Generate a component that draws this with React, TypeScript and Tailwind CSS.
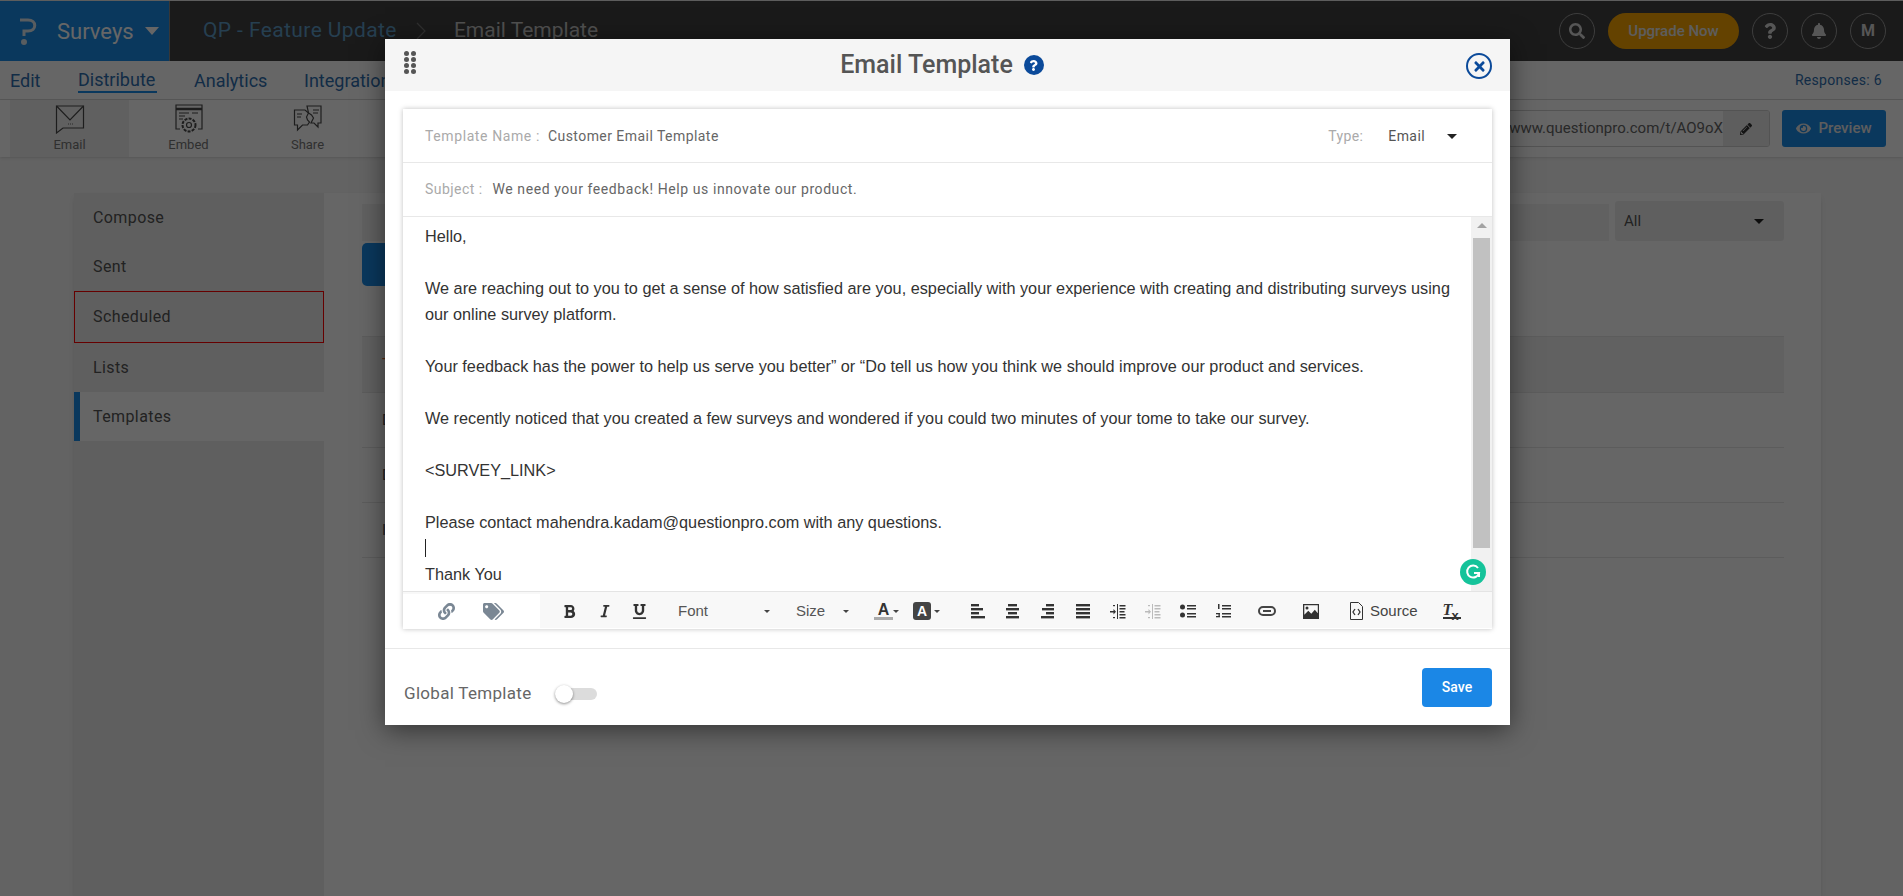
import type { ReactNode } from 'react'
import { FaBell, FaEye, FaLink, FaPencilAlt, FaQuestion, FaSearch, FaTags, FaTimes, FaBold, FaItalic, FaUnderline } from 'react-icons/fa'

const sideItems = ['Compose', 'Sent', 'Scheduled', 'Lists', 'Templates']
const tableRows = ['Default', 'Default', 'Invite']

function Caret({ className }: { className: string }) {
  return <span className={`inline-block h-0 w-0 border-x-transparent border-b-0 border-t-current ${className}`} />
}

function RoundButton({ children }: { children: ReactNode }) {
  return (
    <div className="flex h-9 w-9 items-center justify-center rounded-full border border-[#9a9a9a] text-[#d8d8d8]">
      {children}
    </div>
  )
}

function EmailIcon() {
  return (
    <svg width="30" height="30" viewBox="0 0 30 30" fill="none" stroke="#4a4a4a" strokeWidth="1.2">
      <path d="M1.5 2h27v22H8l-6.5 5z" />
      <path d="M1.5 2 15 16 28.5 2" />
      <path d="M13 20h.8M15 20h.8M17 20h.8" />
    </svg>
  )
}

function EmbedIcon() {
  return (
    <svg width="28" height="30" viewBox="0 0 28 30" fill="none" stroke="#4a4a4a" strokeWidth="1.2">
      <path d="M5 25H1V1h26v24h-4" />
      <path d="M1 5h26" strokeWidth="2.5" />
      <path d="M4 9h10M4 12h6M4 15h4M17 9h6" />
      <circle cx="14" cy="21" r="6.5" strokeDasharray="3 1.2" strokeWidth="2" />
      <circle cx="14" cy="21" r="2.5" />
    </svg>
  )
}

function ShareIcon() {
  return (
    <svg width="30" height="28" viewBox="0 0 30 28" fill="none" stroke="#4a4a4a" strokeWidth="1.2">
      <path d="M12 6H1.5v15h3v5l5-5h5l2-3-2-2-1-3 2-4z" />
      <path d="M14 2h14v17h-3v4l-4-4h-3l1.500-3 1-2-2-3-3-2z" />
      <path d="M4 10h5M4 13h4M20 6h6M20 9h5" />
    </svg>
  )
}

function Bars({ rows, className = 'text-[#333]' }: { rows: [number, number][]; className?: string }) {
  return (
    <svg width="16" height="15" viewBox="0 0 16 15" className={className} fill="currentColor">
      {rows.map(([x, w], i) => (
        <rect key={i} x={x} y={i * 4} width={w} height="2.4" />
      ))}
    </svg>
  )
}

function IndentIcon({ className }: { className: string }) {
  return (
    <svg width="16" height="15" viewBox="0 0 16 15" className={className} fill="currentColor">
      <rect x="7" y="0" width="1" height="15" />
      <rect x="9.500" y="1" width="6" height="1.500" />
      <rect x="9.500" y="4" width="6" height="1.500" />
      <rect x="9.500" y="7" width="5" height="1.500" />
      <rect x="9.500" y="10" width="6" height="1.500" />
      <rect x="9.500" y="13" width="6" height="1.500" />
      <path d="M0 7h3.500V5l2.500 2.700L3.500 10.500V8.500H0z" />
      <rect x="3" y="1" width="2" height="1.200" />
      <rect x="3" y="13" width="2" height="1.200" />
    </svg>
  )
}

function Tool({ children }: { children: ReactNode }) {
  return <div className="flex h-full w-[35px] items-center justify-center text-[#333]">{children}</div>
}

export default function App() {
  return (
    <div className="relative h-[896px] w-full overflow-hidden bg-[#f7f7f7] font-[Roboto,sans-serif]">
      <header className="flex h-[61px] items-stretch border-t border-t-[#e8e8e8] bg-[#414141]">
        <div className="flex w-[170px] items-center border-r border-r-[#8a8a8a] bg-[#1a8ce8] text-white">
          <svg width="20" height="30" viewBox="0 0 20 30" className="ml-[18px] text-[#dfe8ef]" fill="none" stroke="currentColor" strokeWidth="3">
            <path d="M2 4h8c9 0 9 11 0 11H6v5" />
            <circle cx="6" cy="26" r="1.500" fill="currentColor" />
          </svg>
          <span className="ml-[19px] text-[22px]">Surveys</span>
          <Caret className="ml-[11px] border-x-[7px] border-t-[8px]" />
        </div>
        <div className="ml-[33px] flex items-center text-[21px]">
          <span className="tracking-[0.4px] text-[#5f9dc8]">QP - Feature Update</span>
          <svg width="10" height="18" viewBox="0 0 10 18" className="ml-[19px] text-[#777]" fill="none" stroke="currentColor" strokeWidth="1.2">
            <path d="m1 1 8 8-8 8" />
          </svg>
          <span className="ml-[28px] text-[#c8c8c8]">Email Template</span>
        </div>
        <div className="ml-auto mr-[17px] flex items-center gap-[13px]">
          <RoundButton>
            <FaSearch size={16} />
          </RoundButton>
          <div className="flex h-9 w-[131px] items-center justify-center rounded-full bg-[#f9a602] text-[15px] font-medium text-[#e8e8e8]">
            Upgrade Now
          </div>
          <RoundButton>
            <FaQuestion size={16} />
          </RoundButton>
          <RoundButton>
            <FaBell size={16} />
          </RoundButton>
          <RoundButton>
            <span className="text-[16px] font-bold">M</span>
          </RoundButton>
        </div>
      </header>

      <nav className="flex h-[39px] items-center border-b border-b-[#d8d8d8] bg-white pl-[10px] pr-[21px] text-[18px] text-[#2f6fb0]">
        <span className="w-[68px]">Edit</span>
        <span className="mr-[37px] w-[79px] border-b-2 border-b-[#1a8ce8] leading-[23px]">Distribute</span>
        <span className="w-[110px]">Analytics</span>
        <span>Integrations</span>
        <span className="ml-auto text-[14px] tracking-[0.3px]">Responses: 6</span>
      </nav>

      <div className="flex h-[57px] bg-white pl-[10px] pr-[17px] shadow-sm">
        {[
          { label: 'Email', icon: <EmailIcon />, active: true },
          { label: 'Embed', icon: <EmbedIcon />, active: false },
          { label: 'Share', icon: <ShareIcon />, active: false },
        ].map((item) => (
          <div key={item.label} className={`flex w-[119px] flex-col items-center pt-[4px] ${item.active ? 'bg-[#f0f0f0]' : ''}`}>
            <div className="h-[32px]">{item.icon}</div>
            <span className="mt-[1px] text-[13px] leading-[16px] text-[#777]">{item.label}</span>
          </div>
        ))}
        <div className="ml-auto flex items-center gap-[12px]">
          <div className="flex h-[37px] w-[262px] items-stretch overflow-hidden rounded-[3px] border border-[#d0d0d0]">
            <span className="flex min-w-0 flex-1 items-center justify-end overflow-hidden whitespace-nowrap text-[15px] text-[#666]">www.questionpro.com/t/AO9oX</span>
            <span className="flex w-[46px] shrink-0 items-center justify-center bg-[#eaeaea] text-[#333]">
              <FaPencilAlt size={12} />
            </span>
          </div>
          <div className="flex h-[37px] w-[104px] items-center justify-center gap-[7px] rounded-[3px] bg-[#1a8ce8] text-[15px] font-medium text-[#e8e8e8]">
            <FaEye size={15} />
            Preview
          </div>
        </div>
      </div>

      <main className="flex h-[740px] pl-[74px] pr-[82px] pt-[36px]">
        <div className="flex min-h-0 flex-1 bg-white shadow-md">
          <aside className="flex w-[250px] shrink-0 flex-col bg-[#eeeeee]">
            {sideItems.map((item) => (
              <div
                key={item}
                className={`flex items-center text-[16px] tracking-[0.4px] text-[#555] ${
                  item === 'Scheduled'
                    ? 'h-[52px] border border-[#ff0000] pl-[18px]'
                    : item === 'Lists'
                      ? 'h-[49px] pl-[19px]'
                      : item === 'Templates'
                        ? 'h-[49px] border-l-[6px] border-l-[#1a8ce8] bg-white pl-[13px]'
                        : 'h-[49px] pl-[19px]'
                }`}
              >
                {item}
              </div>
            ))}
          </aside>
          <section className="flex-1 pl-[38px] pr-[37px] pt-[8px]">
            <div className="flex h-[40px] gap-[6px]">
              <div className="mt-[3px] flex-1 bg-[#f3f3f3]" />
              <div className="flex w-[169px] items-center justify-between rounded-[3px] bg-[#eeeeee] pl-[9px] pr-[20px] text-[15px] text-[#555]">
                All
                <Caret className="border-x-[5px] border-t-[5px] text-[#222]" />
              </div>
            </div>
            <div className="mt-[2px] flex h-[43px] w-[150px] items-center justify-center rounded-[5px] bg-[#1a8ce8] text-white">Create</div>
            <div className="mt-[50px] border-t border-t-[#e6e6e6]">
              <div className="flex h-[56px] items-center border-b border-b-[#e6e6e6] bg-[#f3f3f3] pl-[20px] text-[15px] text-[#e06a2c]">Template</div>
              {tableRows.map((row, i) => (
                <div key={i} className="flex h-[55px] items-center border-b border-b-[#e6e6e6] pl-[20px] text-[15px] text-[#555]">
                  {row}
                </div>
              ))}
            </div>
          </section>
        </div>
      </main>

      <div className="absolute inset-0 bg-black/60" />

      <div className="absolute left-[385px] top-[39px] flex h-[686px] w-[1125px] flex-col bg-white shadow-[0_5px_25px_rgba(0,0,0,0.5)]">
        <div className="relative flex h-[52px] shrink-0 items-center justify-center bg-[#f5f5f5] pr-[11px]">
          <div className="absolute left-[19px] top-[12px] grid grid-cols-2 gap-x-[2px] gap-y-[1px]">
            {Array.from({ length: 8 }).map((_, i) => (
              <span key={i} className="h-[5px] w-[5px] rounded-full bg-[#555]" />
            ))}
          </div>
          <span className="text-[25px] font-medium text-[#555]">Email Template</span>
          <span className="ml-[11px] flex h-[20px] w-[20px] items-center justify-center rounded-full bg-[#0b4a9a] text-white">
            <FaQuestion size={11} />
          </span>
          <span className="absolute left-[1081px] top-[14px] flex h-[26px] w-[26px] items-center justify-center rounded-full border-2 border-[#0b4a9a] text-[#0b4a9a]">
            <FaTimes size={15} />
          </span>
        </div>

        <div className="mx-[18px] mt-[18px] flex h-[520px] shrink-0 flex-col shadow-[0_0_5px_rgba(0,0,0,0.25)]">
          <div className="flex h-[54px] shrink-0 items-center border-b border-b-[#e8e8e8] pl-[22px] pr-[35px] pt-[2px] text-[14px]">
            <span className="tracking-[0.6px] text-[#aaa]">Template Name :</span>
            <span className="ml-[8px] tracking-[0.45px] text-[#666]">Customer Email Template</span>
            <span className="ml-auto tracking-[0.4px] text-[#aaa]">Type:</span>
            <span className="ml-[25px] tracking-[0.4px] text-[#555]">Email</span>
            <Caret className="ml-[22px] border-x-[5px] border-t-[5px] text-[#222]" />
          </div>
          <div className="flex h-[54px] shrink-0 items-center border-b border-b-[#e8e8e8] pl-[22px] text-[14px]">
            <span className="tracking-[0.45px] text-[#aaa]">Subject :</span>
            <span className="ml-[10px] tracking-[0.58px] text-[#666]">We need your feedback! Help us innovate our product.</span>
          </div>
          <div className="relative flex h-[375px] shrink-0 border-b border-b-[#e4e4e4]">
            <div className="flex-1 pl-[22px] pr-[8px] pt-[6px] font-['Liberation_Sans',Arial,sans-serif] text-[16.25px] leading-[26px] text-[#333]">
              <p>Hello,</p>
              <p className="mt-[26px]">
                We are reaching out to you to get a sense of how satisfied are you, especially with your experience with creating and distributing surveys using our online survey platform.
              </p>
              <p className="mt-[26px]">Your feedback has the power to help us serve you better” or “Do tell us how you think we should improve our product and services.</p>
              <p className="mt-[26px]">We recently noticed that you created a few surveys and wondered if you could two minutes of your tome to take our survey.</p>
              <p className="mt-[26px]">&lt;SURVEY_LINK&gt;</p>
              <p className="mt-[26px]">Please contact mahendra.kadam@questionpro.com with any questions.</p>
              <p className="h-[26px]">
                <span className="mt-[4px] inline-block h-[18px] w-px bg-[#222] align-top" />
              </p>
              <p>Thank You</p>
            </div>
            <div className="flex w-[21px] shrink-0 flex-col items-center bg-[#f1f1f1] pt-[6px]">
              <span className="h-0 w-0 border-x-[5px] border-b-[5px] border-x-transparent border-b-[#a3a3a3]" />
              <span className="mt-[10px] h-[310px] w-[17px] bg-[#c1c1c1]" />
            </div>
            <span className="absolute bottom-[6px] right-[6px] flex h-[26px] w-[26px] items-center justify-center rounded-full bg-[#15c39a]">
              <svg width="16" height="16" viewBox="0 0 16 16" fill="none" stroke="white" strokeWidth="2">
                <path d="M13 4a6 6 0 1 0 1 5H9" />
                <path d="M14 13V9" />
              </svg>
            </span>
          </div>
          <div className="flex h-[36px] shrink-0 items-center bg-[#f8f8f8] pt-[2px] text-[15px]">
            <div className="flex h-full w-[137px] shrink-0 items-center bg-white pl-[35px] text-[#7a8794]">
              <FaLink size={17} />
              <FaTags size={21} className="ml-[28px]" />
            </div>
            <div className="ml-[12px] flex h-full">
              <Tool>
                <FaBold size={15} />
              </Tool>
              <Tool>
                <FaItalic size={14} />
              </Tool>
              <Tool>
                <FaUnderline size={15} />
              </Tool>
            </div>
            <div className="ml-[21px] flex w-[92px] items-center font-['Liberation_Sans',Arial,sans-serif] text-[#555]">
              Font
              <Caret className="ml-auto border-x-[3px] border-t-[3px] text-[#444]" />
            </div>
            <div className="ml-[26px] flex w-[53px] items-center font-['Liberation_Sans',Arial,sans-serif] text-[#555]">
              Size
              <Caret className="ml-auto border-x-[3px] border-t-[3px] text-[#444]" />
            </div>
            <div className="ml-[25px] flex flex-col items-center leading-[14px] text-[#333]">
              <span className="font-['Liberation_Sans',Arial,sans-serif] text-[16px] font-bold leading-[15px]">A</span>
              <span className="h-[3px] w-[19px] bg-[#aaa]" />
            </div>
            <Caret className="border-x-[3px] border-t-[3px] text-[#444]" />
            <span className="ml-[14px] flex h-[18px] w-[18px] items-center justify-center rounded-[3px] bg-[#444] font-['Liberation_Sans',Arial,sans-serif] text-[14px] font-bold text-white">A</span>
            <Caret className="ml-[3px] border-x-[3px] border-t-[3px] text-[#444]" />
            <div className="ml-[20px] flex h-full">
              <Tool>
                <Bars rows={[[1, 8], [1, 12], [1, 8], [1, 14]]} />
              </Tool>
              <Tool>
                <Bars rows={[[3, 9], [1, 13], [3, 9], [1, 13]]} />
              </Tool>
              <Tool>
                <Bars rows={[[6, 8], [2, 12], [6, 8], [1, 13]]} />
              </Tool>
              <Tool>
                <Bars rows={[[1, 14], [1, 14], [1, 14], [1, 14]]} />
              </Tool>
              <Tool>
                <IndentIcon className="text-[#333]" />
              </Tool>
              <Tool>
                <IndentIcon className="text-[#bbb]" />
              </Tool>
              <Tool>
                <svg width="16" height="15" viewBox="0 0 16 15" fill="currentColor">
                  <circle cx="2.500" cy="3" r="2.500" />
                  <circle cx="2.500" cy="11" r="2.500" />
                  <rect x="7" y="1" width="9" height="1.500" />
                  <rect x="7" y="4" width="9" height="1.500" />
                  <rect x="7" y="9" width="9" height="1.500" />
                  <rect x="7" y="12" width="9" height="1.500" />
                </svg>
              </Tool>
              <Tool>
                <svg width="16" height="15" viewBox="0 0 16 15" fill="currentColor">
                  <rect x="3" y="0" width="1.500" height="5" />
                  <rect x="1" y="9" width="4" height="1.300" />
                  <rect x="3.500" y="10" width="1.300" height="2" />
                  <rect x="1" y="12" width="4" height="1.300" />
                  <rect x="7" y="1" width="9" height="1.500" />
                  <rect x="7" y="4" width="9" height="1.500" />
                  <rect x="7" y="9" width="9" height="1.500" />
                  <rect x="7" y="12" width="9" height="1.500" />
                </svg>
              </Tool>
            </div>
            <span className="ml-[18px] text-[#444]">
              <svg width="18" height="10" viewBox="0 0 18 10" fill="none" stroke="currentColor" strokeWidth="2">
                <rect x="1" y="1" width="16" height="8" rx="4" />
                <path d="M5 5h8" />
              </svg>
            </span>
            <svg width="16" height="15" viewBox="0 0 16 15" className="ml-[27px] text-[#333]" fill="currentColor">
              <path d="M0 0h16v15H0zm1.300 1.300v9.500l4-4 3 3 3.500-4 3 3.500V1.300z" fillRule="evenodd" />
              <circle cx="4" cy="4" r="1.500" />
            </svg>
            <svg width="13" height="18" viewBox="0 0 13 18" className="ml-[31px] text-[#333]" fill="none" stroke="currentColor" strokeWidth="1">
              <path d="M.5.500h8l4 4v13H.5z" />
              <path d="M5 7 3 10l2 3M8 7l2 3-2 3" strokeWidth="1.300" />
            </svg>
            <span className="ml-[7px] font-['Liberation_Sans',Arial,sans-serif] text-[15px] text-[#444]">Source</span>
            <span className="relative ml-[25px] h-[18px] w-[18px] font-['Liberation_Serif',serif] text-[#333]">
              <span className="block border-b-2 border-b-[#333] text-[16px] font-bold italic leading-[15px]">T</span>
              <span className="absolute left-[9px] top-[8px] font-['Liberation_Sans',sans-serif] text-[13px] font-bold leading-[12px]">x</span>
            </span>
          </div>
        </div>

        <div className="mt-[19px] flex flex-1 items-start border-t border-t-[#e8e8e8] pl-[19px] pr-[18px] pt-[19px]">
          <div className="mt-[13px] flex items-center">
            <span className="text-[17px] tracking-[0.3px] text-[#666]">Global Template</span>
            <span className="relative ml-[24px] h-[12px] w-[42px] rounded-full bg-[#dcdcdc]">
              <span className="absolute left-0 top-[-3px] h-[18px] w-[18px] rounded-full bg-white shadow-[0_1px_3px_rgba(0,0,0,0.45)]" />
            </span>
          </div>
          <div className="ml-auto flex h-[39px] w-[70px] items-center justify-center rounded-[4px] bg-[#1b87e6] text-[14px] font-medium text-white">Save</div>
        </div>
      </div>
    </div>
  )
}
